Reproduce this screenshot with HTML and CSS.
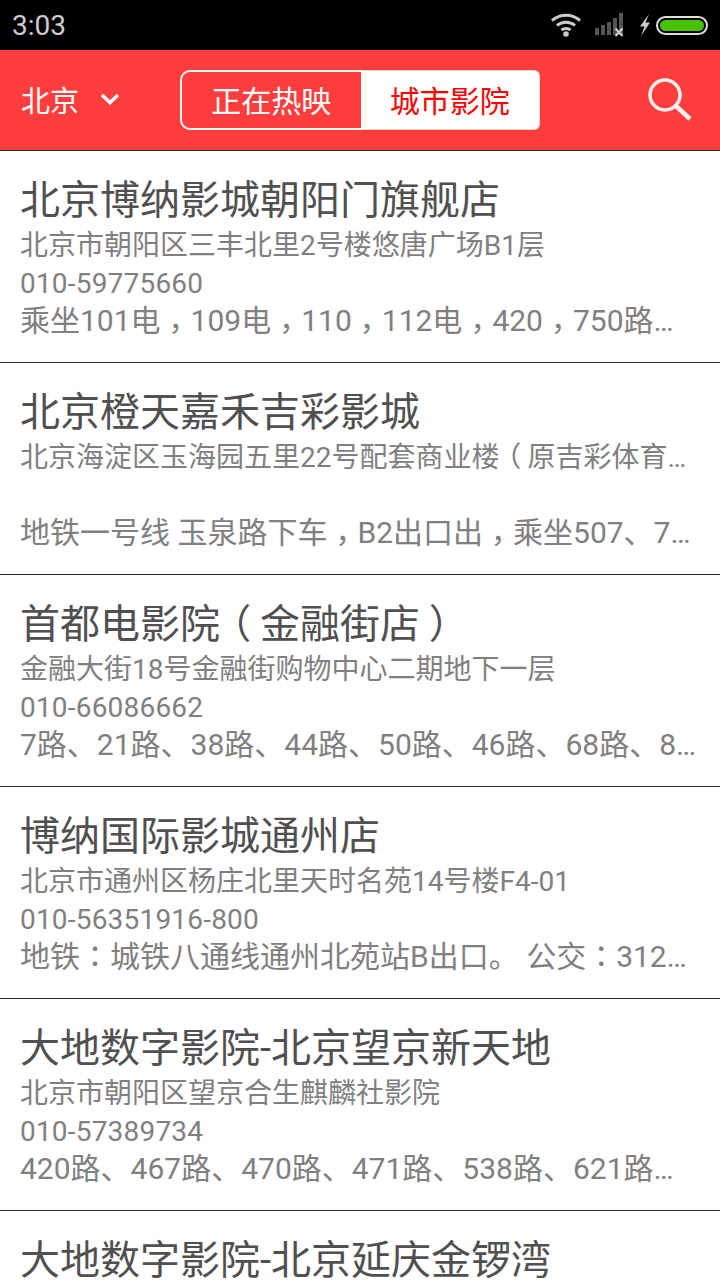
FILE: index.html
```html
<!DOCTYPE html>
<html lang="zh-CN">
<head>
<meta charset="utf-8">
<title>城市影院</title>
<link rel="stylesheet" href="styles.css">
</head>
<body>
<div class="status">
  <span class="time">3:03</span>
  <div class="status-icons">
    <svg class="ic-wifi" width="32" height="26" viewBox="0 0 32 26"><g fill="none" stroke="#ccc" stroke-width="3"><path d="M2 8.500C10 1.500 22 1.500 30 8.500"/><path d="M7 13.500C12 9 20 9 25 13.500"/><path d="M11.500 18C14 16 18 16 20.500 18"/></g><circle cx="16" cy="22" r="2.800" fill="#ccc"/></svg>
    <svg class="ic-signal" width="30" height="26" viewBox="0 0 30 26"><g fill="#555"><rect x="1" y="16" width="4" height="7"/><rect x="7" y="13" width="4" height="10"/><rect x="13" y="10" width="4" height="13"/><rect x="19" y="6" width="4" height="17"/><rect x="25" y="1" width="4" height="22"/></g><path d="M21.500 16.500L28.500 24M28.500 16.500L21.500 24" stroke="#ccc" stroke-width="2.200"/></svg>
    <svg class="ic-bolt" width="12" height="22" viewBox="0 0 12 22"><path d="M10 0L1 12.500H5.500L2 22L11 8.500H6.500Z" fill="#ccc"/></svg>
    <div class="battery"><div class="battery-fill"></div></div>
  </div>
</div>
<header class="nav">
  <div class="city">
    <span>北京</span>
    <svg width="20" height="14" viewBox="0 0 20 14"><path d="M2 3L10 10.500L18 3" fill="none" stroke="#fff" stroke-width="3.500"/></svg>
  </div>
  <div class="tabs">
    <div class="tab">正在热映</div>
    <div class="tab tab-on">城市影院</div>
  </div>
  <svg class="search" width="46" height="46" viewBox="0 0 46 46"><circle cx="17" cy="19" r="15" fill="none" stroke="#fff" stroke-width="3.500" opacity=".92"/><path d="M28 30L42 43" fill="none" stroke="#fff" stroke-width="4.500" opacity=".92"/></svg>
</header>
<main>
  <div class="item">
    <div class="name">北京博纳影城朝阳门旗舰店</div>
    <div class="addr">北京市朝阳区三丰北里2号楼悠唐广场B1层</div>
    <div class="phone">010-59775660</div>
    <div class="route">乘坐101电<span class="p cm" lang="zh-TW">，</span>109电<span class="p cm" lang="zh-TW">，</span>110<span class="p cm" lang="zh-TW">，</span>112电<span class="p cm" lang="zh-TW">，</span>420<span class="p cm" lang="zh-TW">，</span>750路<span class="p cm" lang="zh-TW">，</span>特8路</div>
  </div>
  <div class="item">
    <div class="name">北京橙天嘉禾吉彩影城</div>
    <div class="addr">北京海淀区玉海园五里22号配套商业楼<span class="p po" lang="zh-TW">（</span>原吉彩体育馆<span class="p pc" lang="zh-TW">）</span></div>
    <div class="phone"></div>
    <div class="route">地铁一号线 玉泉路下车<span class="p cm" lang="zh-TW">，</span>B2出口出<span class="p cm" lang="zh-TW">，</span>乘坐507、717路公交车</div>
  </div>
  <div class="item">
    <div class="name">首都电影院<span class="p po" lang="zh-TW">（</span>金融街店<span class="p pc" lang="zh-TW">）</span></div>
    <div class="addr">金融大街18号金融街购物中心二期地下一层</div>
    <div class="phone">010-66086662</div>
    <div class="route">7路、21路、38路、44路、50路、46路、68路、80路、88路</div>
  </div>
  <div class="item">
    <div class="name">博纳国际影城通州店</div>
    <div class="addr">北京市通州区杨庄北里天时名苑14号楼F4-01</div>
    <div class="phone">010-56351916-800</div>
    <div class="route">地铁<span class="p" lang="zh-TW">：</span>城铁八通线通州北苑站B出口。 公交<span class="p" lang="zh-TW">：</span>312路、322路</div>
  </div>
  <div class="item">
    <div class="name">大地数字影院-北京望京新天地</div>
    <div class="addr">北京市朝阳区望京合生麒麟社影院</div>
    <div class="phone">010-57389734</div>
    <div class="route">420路、467路、470路、471路、538路、621路、629路</div>
  </div>
  <div class="item item-last">
    <div class="name">大地数字影院-北京延庆金锣湾</div>
  </div>
</main>
</body>
</html>
```
FILE: styles.css
```css
* { box-sizing: border-box; }
html, body { margin: 0; padding: 0; }
body {
  width: 720px;
  height: 1280px;
  overflow: hidden;
  background: #fff;
  font-family: Roboto, "Noto Sans CJK SC", sans-serif;
}
.status {
  height: 50px;
  background: #000;
  display: flex;
  align-items: center;
  justify-content: space-between;
  padding: 0 12px 0 12px;
}
.time { color: #ccc; font-size: 28px; }
.status-icons { display: flex; align-items: center; }
.ic-wifi { margin-right: 12px; }
.ic-signal { margin-right: 15px; }
.ic-bolt { margin-right: 5px; }
.battery {
  width: 52px;
  height: 19px;
  border: 2px solid #ddd;
  border-radius: 10px;
  padding: 2px;
}
.battery-fill {
  height: 100%;
  background: #46c300;
  border-radius: 6px;
}
.nav {
  height: 101px;
  background: #ff3d3d;
  border-bottom: 1px solid #2a2a2a;
  display: flex;
  align-items: center;
  padding: 0 26px 0 21px;
}
.city {
  display: flex;
  align-items: center;
  gap: 21px;
  width: 159px;
  padding-bottom: 3px;
  color: #fff;
  font-size: 29px;
}
.tabs {
  display: flex;
  width: 360px;
  height: 60px;
}
.tab {
  flex: 1;
  display: flex;
  align-items: center;
  justify-content: center;
  padding-bottom: 3px;
  border: 2px solid #fff;
  border-right: 0;
  border-radius: 10px 0 0 10px;
  color: #fff;
  font-size: 30px;
}
.tab-on {
  background: #fff;
  border: 1px solid #d8d8d8;
  border-left: 0;
  border-radius: 0 6px 6px 0;
  color: #f00;
}
.search { margin: 0 0 3px auto; }
.item {
  height: 212px;
  border-bottom: 1px solid #2a2a2a;
  padding: 24px 20px 0;
}
.item-last { border-bottom: 0; }
.name, .addr, .phone, .route {
  white-space: nowrap;
  overflow: hidden;
  text-overflow: ellipsis;
}
.name { font-size: 40px; line-height: 52px; color: #505050; }
.addr { font-size: 28px; line-height: 38px; color: #808080; }
.phone { font-size: 28px; line-height: 38px; height: 37px; color: #808080; letter-spacing: .2px; }
.route { font-size: 30px; line-height: 37px; color: #808080; }
.p { font-family: "Noto Sans CJK TC", sans-serif; line-height: 0; }
.po, .pc, .cm { display: inline-block; }
.cm { transform: translateY(.26em); }
.po { transform: translateX(-.22em); }
.pc { transform: translateX(.22em); }
```
